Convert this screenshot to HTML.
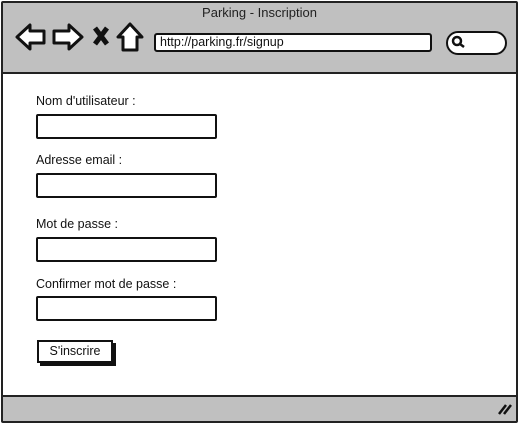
<!DOCTYPE html><html><head><style>
body{margin:0;width:519px;height:424px;background:#fff;font-family:"Liberation Sans",sans-serif;position:relative;overflow:hidden}
.a{position:absolute}
.lbl{position:absolute;left:36px;font-size:12.5px;color:#111}
.in{position:absolute;left:36px;width:177px;height:21px;border:2px solid #111;border-radius:2px;background:#fff}
</style></head><body>
<div class="a" style="left:1px;top:1px;width:513px;height:418px;border:2px solid #222;border-radius:2px"></div>
<div class="a" style="left:3px;top:3px;width:513px;height:69px;background:#c0c0c0;border-bottom:2px solid #222"></div>
<div class="a" style="left:3px;top:395px;width:513px;height:24px;background:#c0c0c0;border-top:2px solid #222"></div>
<div class="a" style="left:0;top:5px;width:519px;text-align:center;font-size:13px;color:#222">Parking - Inscription</div>
<svg class="a" style="left:14px;top:21px" width="135" height="34" viewBox="0 0 135 34">
<path d="M3 16 L16 4 L16 10 L30 10 L30 22 L16 22 L16 28 Z" fill="#fff" stroke="#111" stroke-width="3" stroke-linejoin="round"/>
<path d="M68 16 L55 4 L55 10 L40 10 L40 22 L55 22 L55 28 Z" fill="#fff" stroke="#111" stroke-width="3" stroke-linejoin="round"/>
<path d="M81 7 L93 23 M93 7 L81 23" stroke="#111" stroke-width="5"/>
<path d="M116 3 L104 16 L109 16 L109 29 L123 29 L123 16 L128 16 Z" fill="#fff" stroke="#111" stroke-width="3" stroke-linejoin="round"/>
</svg>
<div class="a" style="left:154px;top:33px;width:270px;height:15px;border:2px solid #111;border-radius:3px;background:#fff;font-size:12.5px;line-height:15px;padding-left:4px;color:#111">http://parking.fr/signup</div>
<div class="a" style="left:446px;top:31px;width:57px;height:20px;border:2px solid #111;border-radius:12px;background:#fff"></div>
<svg class="a" style="left:451px;top:35px" width="16" height="14"><circle cx="6" cy="6" r="4" fill="none" stroke="#111" stroke-width="2.5"/><path d="M9 9 L13 12" stroke="#111" stroke-width="2.5"/></svg>
<div class="lbl" style="top:94px">Nom d'utilisateur :</div>
<div class="in" style="top:114px"></div>
<div class="lbl" style="top:153px">Adresse email :</div>
<div class="in" style="top:173px"></div>
<div class="lbl" style="top:217px">Mot de passe :</div>
<div class="in" style="top:237px"></div>
<div class="lbl" style="top:277px">Confirmer mot de passe :</div>
<div class="in" style="top:296px"></div>
<div class="a" style="left:37px;top:340px;width:72px;height:19px;border:2px solid #111;background:#fff;box-shadow:3px 3px 0 #111;font-size:12.5px;line-height:19px;text-align:center;color:#111">S'inscrire</div>
<svg class="a" style="left:497px;top:402px" width="16" height="14"><path d="M2 12 L9 3 M7 12 L14 3" stroke="#111" stroke-width="2.5"/></svg>
</body></html>
